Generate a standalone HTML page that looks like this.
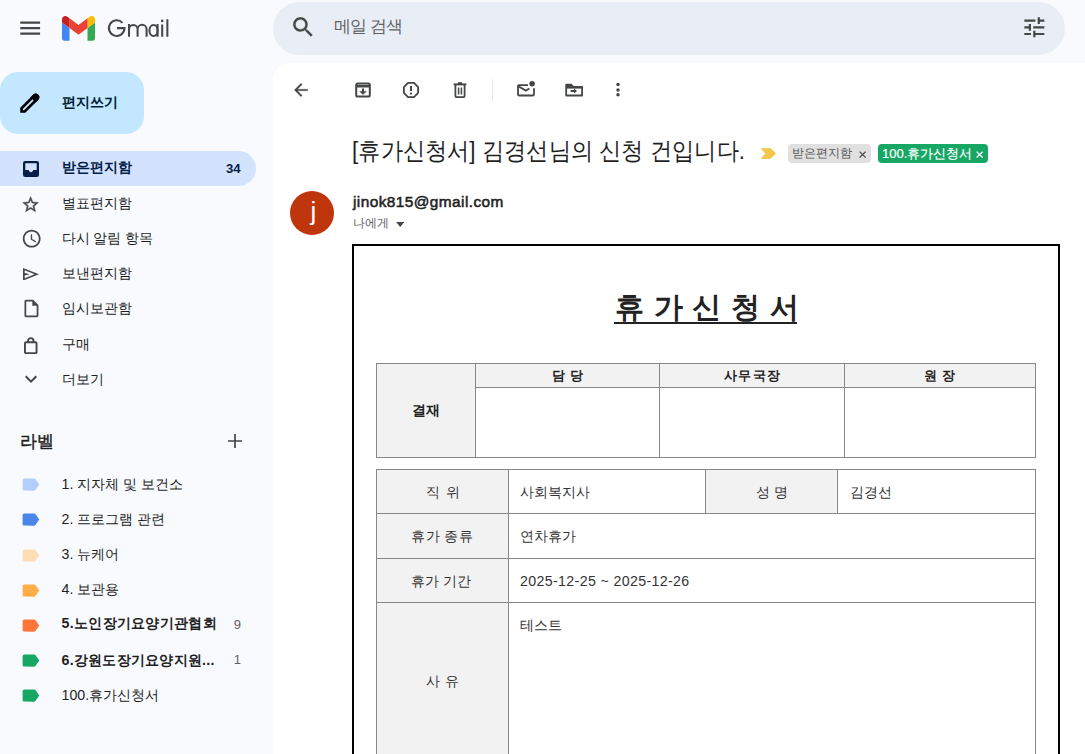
<!DOCTYPE html>
<html><head><meta charset="utf-8">
<style>
*{box-sizing:border-box;margin:0;padding:0}
html,body{width:1085px;height:754px;overflow:hidden}
body{background:#f8fafd;font-family:"Liberation Sans",sans-serif;color:#1f1f1f;position:relative}
.a{position:absolute;white-space:nowrap;line-height:1}
svg{position:absolute;display:block}
.nav{position:absolute;left:0;width:256px;height:35px}
.nav .t{position:absolute;left:61.5px;top:10px;font-size:14.2px;line-height:1;color:#1f1f1f;white-space:nowrap}
.nav svg{fill:#444746}
.lab{position:absolute;left:0;width:256px;height:35px}
.lab .t{position:absolute;left:61.5px;top:10px;font-size:14.2px;line-height:1;color:#1f1f1f;white-space:nowrap}
.lab .c{position:absolute;right:15px;top:10.2px;font-size:13px;line-height:1;color:#5e6063}
.lab svg{left:20px;top:7.2px}
#panel{position:absolute;left:273px;top:63px;width:812px;height:691px;background:#fff;border-top-left-radius:17px}
.ti{fill:#444746}
table{border-collapse:collapse;position:absolute;table-layout:fixed}
td{border:1px solid #8a8a8a;font-size:14.2px;color:#222;line-height:1}
td.h{background:#f2f2f2;text-align:center}
</style></head>
<body>
<!-- header -->
<svg style="left:16.7px;top:15.4px" width="26.4" height="26.4" viewBox="0 0 24 24" fill="#444746"><path d="M3 18h18v-2H3v2zm0-5h18v-2H3v2zm0-7v2h18V6H3z"/></svg>
<svg style="left:62px;top:16px" width="33" height="24.75" viewBox="52 42 88 66"><path fill="#4285f4" d="M58 108h14V74L52 59v43c0 3.32 2.69 6 6 6"/><path fill="#34a853" d="M120 108h14c3.32 0 6-2.69 6-6V59l-20 15"/><path fill="#fbbc04" d="M120 48v26l20-15v-8c0-7.42-8.470-11.65-14.4-7.2"/><path fill="#ea4335" d="M72 74V48l24 18 24-18v26L96 92"/><path fill="#c5221f" d="M52 51v8l20 15V48l-5.6-4.2c-5.94-4.450-14.4-.22-14.4 7.2"/></svg>
<svg style="left:100px;top:10px" width="80" height="35" viewBox="100 10 80 35" fill="none" stroke="#474747" stroke-width="2.05"><path d="M122.5 22.9A7.8 7.8 0 1 0 124.5 28.1H117"/><path d="M129 24V36.85M129 29.3A4.3 4.3 0 0 1 137.6 29.3V36.85M137.6 29.3A4.5 4.5 0 0 1 146.6 29.3V36.85"/><ellipse cx="153.55" cy="30.45" rx="4.1" ry="5.5"/><path d="M157.55 24V36.85M162.2 24.5V36.85M167.35 19.3V36.85"/><circle cx="162.2" cy="20.9" r="1.3" fill="#474747" stroke="none"/></svg>

<div class="a" style="left:273px;top:2px;width:792px;height:53px;border-radius:27px;background:#e9eef6"></div>
<svg style="left:290.1px;top:14.1px" width="26.4" height="26.4" viewBox="0 0 24 24" fill="#444746" stroke="#444746" stroke-width="0.25"><path d="M15.5 14h-.79l-.28-.27C15.41 12.59 16 11.110 16 9.5 16 5.91 13.09 3 9.5 3S3 5.91 3 9.5 5.91 16 9.5 16c1.61 0 3.09-.59 4.23-1.57l.27.28v.79l5 4.99L20.49 19l-4.99-5zm-6 0C7.01 14 5 11.99 5 9.5S7.01 5 9.5 5 14 7.01 14 9.5 11.99 14 9.5 14z"/></svg>
<div class="a" style="left:333.5px;top:18px;font-size:17px;letter-spacing:-0.7px;color:#5f6368">메일 검색</div>
<svg style="left:1020.7px;top:13.7px" width="26.67" height="26.67" viewBox="0 0 24 24" fill="#444746"><path d="M3 17v2h6v-2H3zM3 5v2h10V5H3zm10 16v-2h8v-2h-8v-2h-2v6h2zM7 9v2H3v2h4v2h2V9H7zm14 4v-2H11v2h10zm-6-4h2V7h4V5h-4V3h-2v6z"/></svg>

<!-- compose -->
<div class="a" style="left:0;top:72px;width:144px;height:62px;border-radius:18px;background:#c2e7ff"></div>
<svg style="left:17px;top:92px;overflow:visible" width="24" height="24" viewBox="0 0 24 24"><g transform="translate(12 12) scale(0.91) translate(-12 -12) rotate(-45 12 12)"><path d="M0.4 12L2.9 9.5H22.3A2.5 2.5 0 0 1 22.3 14.5H2.9Z" fill="none" stroke="#000" stroke-width="2.9" stroke-linejoin="miter"/><path d="M18.3 8.05H22.3A3.95 3.95 0 0 1 22.3 15.95H18.3Z" fill="#000"/></g></svg>
<div class="a" style="left:62px;top:95px;font-size:14.4px;font-weight:bold;color:#001d35">편지쓰기</div>

<!-- nav -->
<div class="nav" style="top:150.5px;background:#d3e3fd;border-radius:0 17.5px 17.5px 0;width:255.5px">
 <svg style="left:23px;top:10.3px" width="16" height="16" viewBox="0 0 16 16"><rect x="0" y="0" width="16" height="16" rx="2.2" fill="#041e49"/><path d="M2.3 2.3H13.7V9.1H10.2C10 10.4 9.1 11.2 8 11.2 6.9 11.2 6 10.4 5.8 9.1H2.3Z" fill="#d3e3fd"/></svg>
 <div class="t" style="font-weight:bold;color:#041e49;top:9px">받은편지함</div>
 <div class="a" style="left:226px;top:11px;font-size:13.2px;font-weight:bold;color:#041e49">34</div>
</div>
<div class="nav" style="top:185.7px">
 <svg style="left:21.4px;top:9.3px" width="19.2" height="19.2" viewBox="0 0 24 24" stroke="#444746" stroke-width="0.5"><path d="M22 9.24l-7.19-.62L12 2 9.19 8.63 2 9.24l5.46 4.73L5.82 21 12 17.27 18.18 21l-1.63-7.03L22 9.24zM12 15.4l-3.76 2.27 1-4.28-3.32-2.88 4.38-.38L12 6.1l1.71 4.04 4.38.38-3.32 2.88 1 4.28L12 15.4z"/></svg>
 <div class="t">별표편지함</div>
</div>
<div class="nav" style="top:220.9px">
 <svg style="left:20.5px;top:7.1px" width="21.4" height="21.4" viewBox="0 0 24 24"><path d="M11.99 2C6.47 2 2 6.48 2 12s4.47 10 9.99 10C17.52 22 22 17.52 22 12S17.52 2 11.99 2zM12 20c-4.42 0-8-3.58-8-8s3.58-8 8-8 8 3.58 8 8-3.58 8-8 8zm.5-13H11v6l5.25 3.150.75-1.23-4.5-2.67z"/></svg>
 <div class="t">다시 알림 항목</div>
</div>
<div class="nav" style="top:256.1px">
 <svg style="left:23.2px;top:11.5px" width="16" height="12.6" viewBox="120 160 760 640" preserveAspectRatio="none"><path d="M120-160v-640l760 320-760 320Zm80-120 474-200-474-200v140l240 60-240 60v140Z" transform="translate(0 960)"/></svg>
 <div class="t">보낸편지함</div>
</div>
<div class="nav" style="top:291.3px">
 <svg style="left:20.8px;top:7px" width="20.9" height="20.9" viewBox="0 0 24 24"><path d="M14 2H6c-1.1 0-1.99.9-1.99 2L4 20c0 1.1.89 2 1.99 2H18c1.1 0 2-.9 2-2V8l-6-6zM6 20V4h7v5h5v11H6z"/></svg>
 <div class="t">임시보관함</div>
</div>
<div class="nav" style="top:326.5px">
 <svg style="left:24.3px;top:10px;fill:none" width="13.5" height="17.2" viewBox="0 0 13.5 17.2" stroke="#444746" stroke-width="1.9"><rect x="0.95" y="5.3" width="11.6" height="10.95" rx="1"/><path d="M4 5.3V3.9A2.75 2.75 0 0 1 9.5 3.9V5.3"/></svg>
 <div class="t">구매</div>
</div>
<div class="nav" style="top:361.7px">
 <svg style="left:19px;top:5px" width="24" height="24" viewBox="0 0 24 24"><path d="M16.59 8.59L12 13.17 7.41 8.59 6 10l6 6 6-6z"/></svg>
 <div class="t">더보기</div>
</div>

<div class="a" style="left:20px;top:433.5px;font-size:16.8px;-webkit-text-stroke:0.45px #1f1f1f;letter-spacing:-0.3px;color:#1f1f1f">라벨</div>
<svg style="left:222.7px;top:429.3px" width="24" height="24" viewBox="0 0 24 24" fill="none" stroke="#444746" stroke-width="1.7"><path d="M5 12H19M12 5V19"/></svg>

<!-- labels -->
<div class="lab" style="top:467px"><svg width="21" height="21" viewBox="0 0 24 24" fill="#b3cefb"><path d="M17.63 5.84C17.27 5.33 16.67 5 16 5L5 5.01C3.9 5.01 3 5.9 3 7v10c0 1.1.9 1.99 2 1.99L16 19c.67 0 1.27-.33 1.63-.84L22 12l-4.37-6.16z"/></svg><div class="t">1. 지자체 및 보건소</div></div>
<div class="lab" style="top:502.2px"><svg width="21" height="21" viewBox="0 0 24 24" fill="#4a86e8"><path d="M17.63 5.84C17.27 5.33 16.67 5 16 5L5 5.01C3.9 5.01 3 5.9 3 7v10c0 1.1.9 1.99 2 1.99L16 19c.67 0 1.27-.33 1.63-.84L22 12l-4.37-6.16z"/></svg><div class="t">2. 프로그램 관련</div></div>
<div class="lab" style="top:537.4px"><svg width="21" height="21" viewBox="0 0 24 24" fill="#ffdeb5"><path d="M17.63 5.84C17.27 5.33 16.67 5 16 5L5 5.01C3.9 5.01 3 5.9 3 7v10c0 1.1.9 1.99 2 1.99L16 19c.67 0 1.27-.33 1.63-.84L22 12l-4.37-6.16z"/></svg><div class="t">3. 뉴케어</div></div>
<div class="lab" style="top:572.6px"><svg width="21" height="21" viewBox="0 0 24 24" fill="#ffad47"><path d="M17.63 5.84C17.27 5.33 16.67 5 16 5L5 5.01C3.9 5.01 3 5.9 3 7v10c0 1.1.9 1.99 2 1.99L16 19c.67 0 1.27-.33 1.63-.84L22 12l-4.37-6.16z"/></svg><div class="t" style="top:9.3px">4. 보관용</div></div>
<div class="lab" style="top:607.8px"><svg width="21" height="21" viewBox="0 0 24 24" fill="#ff7537"><path d="M17.63 5.84C17.27 5.33 16.67 5 16 5L5 5.01C3.9 5.01 3 5.9 3 7v10c0 1.1.9 1.99 2 1.99L16 19c.67 0 1.27-.33 1.63-.84L22 12l-4.37-6.16z"/></svg><div class="t" style="font-weight:bold;top:8.6px;letter-spacing:0.3px">5.노인장기요양기관협회</div><div class="c">9</div></div>
<div class="lab" style="top:643px"><svg width="21" height="21" viewBox="0 0 24 24" fill="#16a765"><path d="M17.63 5.84C17.27 5.33 16.67 5 16 5L5 5.01C3.9 5.01 3 5.9 3 7v10c0 1.1.9 1.99 2 1.99L16 19c.67 0 1.27-.33 1.63-.84L22 12l-4.37-6.16z"/></svg><div class="t" style="font-weight:bold;letter-spacing:0.25px">6.강원도장기요양지원...</div><div class="c">1</div></div>
<div class="lab" style="top:678.2px"><svg width="21" height="21" viewBox="0 0 24 24" fill="#16a765"><path d="M17.63 5.84C17.27 5.33 16.67 5 16 5L5 5.01C3.9 5.01 3 5.9 3 7v10c0 1.1.9 1.99 2 1.99L16 19c.67 0 1.27-.33 1.63-.84L22 12l-4.37-6.16z"/></svg><div class="t">100.휴가신청서</div></div>

<!-- panel -->
<div id="panel"></div>
<!-- toolbar -->
<svg style="left:291.1px;top:79.7px" width="20" height="20" viewBox="0 0 24 24" fill="#444746" stroke="#444746" stroke-width="0.3"><path d="M20 11H7.83l5.59-5.59L12 4l-8 8 8 8 1.41-1.41L7.83 13H20v-2z"/></svg>
<svg style="left:353px;top:80px" width="20" height="20" viewBox="0 0 20 20" fill="none" stroke="#444746" stroke-width="2"><rect x="3.2" y="3.4" width="13.6" height="13.2" rx="1.6"/><path d="M3 6.2h14" stroke-width="2.6"/><path d="M10 8.6v4.6" /><path d="M6.8 11.4L10 14.6l3.2-3.2z" fill="#444746" stroke-width="0.6"/></svg>
<svg style="left:401px;top:80px" width="20" height="20" viewBox="0 0 20 20" fill="none" stroke="#444746" stroke-width="1.8"><path d="M7 2.9h6l4.1 4.1v6l-4.1 4.1H7L2.9 13V7z"/><path d="M10 6v5" stroke-width="2"/><circle cx="10" cy="13.6" r="1.1" fill="#444746" stroke="none"/></svg>
<svg style="left:450px;top:80px" width="20" height="20" viewBox="0 0 20 20" fill="none" stroke="#444746" stroke-width="1.8"><path d="M3.6 4.4h12.8" stroke-width="2"/><path d="M8 3.2h4" stroke-width="2"/><path d="M5.4 5v11.1c0 .6.4 1 1 1h7.2c.6 0 1-.4 1-1V5"/><path d="M8.6 7.6v7M11.4 7.6v7" stroke-width="1.5"/></svg>
<div class="a" style="left:492px;top:79px;width:1px;height:22px;background:#e3e6ea"></div>
<svg style="left:516px;top:79px" width="20" height="20" viewBox="0 0 20 20" fill="none" stroke="#444746" stroke-width="1.8"><path d="M12 6.1H2.9c-.5 0-.9.4-.9.9v8.6c0 .5.4.9.9.9h14.2c.5 0 .9-.4.9-.9V9.2"/><path d="M2.4 7.2l7.4 4.4 3.6-2.2"/><circle cx="16.1" cy="4.7" r="2.75" fill="#444746" stroke="none"/></svg>
<svg style="left:564px;top:80px" width="20" height="20" viewBox="0 0 20 20"><path fill="#444746" d="M1.3 4.6Q1.3 3.7 2.2 3.7H7.6L9.6 5.9H18.1Q19 5.9 19 6.8V15.5Q19 16.4 18.1 16.4H2.2Q1.3 16.4 1.3 15.5Z"/><path fill="#fff" d="M3.1 8.6H17.2V14.5H3.1Z"/><path fill="#444746" d="M6.6 10H10.4V11.9H6.6ZM10.1 8.5L13 10.95 10.1 13.4Z"/></svg>
<svg style="left:608px;top:80px" width="20" height="20" viewBox="0 0 20 20" fill="#444746"><circle cx="10" cy="4.6" r="1.75"/><circle cx="10" cy="10" r="1.75"/><circle cx="10" cy="14.8" r="1.75"/></svg>

<!-- subject -->
<div class="a" style="left:352px;top:140px;font-size:22.4px;letter-spacing:0.17px;color:#1f1f1f;transform:scaleY(1.08);transform-origin:0 2px">[휴가신청서] 김경선님의 신청 건입니다.</div>
<svg style="left:761px;top:148.3px" width="15" height="11" viewBox="0 0 15 10.8" fill="#f4c74c"><path d="M0.4 0.4H9.6L14.6 5.4 9.6 10.4H0.4L4.6 5.4z" stroke="#f4c74c" stroke-width="0.8" stroke-linejoin="round"/></svg>
<div class="a" style="left:788px;top:144px;width:83px;height:18.5px;border-radius:4px;background:#dfe0df"></div>
<div class="a" style="left:792px;top:146.5px;font-size:12.4px;color:#555">받은편지함</div>
<svg style="left:858.6px;top:150.6px" width="7.2" height="7.2" viewBox="0 0 7 7" stroke="#555" stroke-width="1.3"><path d="M.6.6l5.8 5.8M6.4.6L.6 6.4"/></svg>
<div class="a" style="left:878px;top:144px;width:110px;height:18.5px;border-radius:4px;background:#16a765"></div>
<div class="a" style="left:882px;top:147px;font-size:13px;-webkit-text-stroke:0.2px #fff;color:#fff">100.휴가신청서</div>
<svg style="left:976px;top:150.6px" width="7.2" height="7.2" viewBox="0 0 7 7" stroke="#fff" stroke-width="1.3"><path d="M.6.6l5.8 5.8M6.4.6L.6 6.4"/></svg>

<!-- sender -->
<div class="a" style="left:290px;top:190.8px;width:44px;height:44px;border-radius:50%;background:#c0360c"></div>
<div class="a" style="left:291.5px;top:198px;width:44px;text-align:center;font-size:26px;color:#fff">j</div>
<div class="a" style="left:353px;top:194px;font-size:15.4px;-webkit-text-stroke:0.55px #1f1f1f;letter-spacing:0.43px;color:#1f1f1f">jinok815@gmail.com</div>
<div class="a" style="left:352.5px;top:217px;font-size:12.2px;color:#5e5e5e">나에게</div>
<svg style="left:395.6px;top:222px" width="8.4" height="4.9" viewBox="0 0 10 6" fill="#444746"><path d="M0 0h10L5 6z"/></svg>

<!-- email body -->
<div class="a" style="left:352px;top:244px;width:708px;height:600px;border:2px solid #000"></div>
<div class="a" style="left:614px;top:293px;width:183.4px;font-size:29px;letter-spacing:0.8px;font-weight:bold;color:#222;border-bottom:2px solid #222;padding-bottom:0;padding-left:1px">휴 가 신 청 서</div>

<!-- table 1 -->
<div class="a" style="left:376px;top:363px;width:660px;height:95px;border:1px solid #888"></div>
<div class="a" style="left:377px;top:364px;width:98px;height:93px;background:#f2f2f2"></div>
<div class="a" style="left:476px;top:364px;width:559px;height:23px;background:#f2f2f2"></div>
<div class="a" style="left:475px;top:363px;width:1px;height:95px;background:#888"></div>
<div class="a" style="left:659px;top:363px;width:1px;height:95px;background:#888"></div>
<div class="a" style="left:844px;top:363px;width:1px;height:95px;background:#888"></div>
<div class="a" style="left:475px;top:387px;width:561px;height:1px;background:#888"></div>
<div class="a" style="left:412px;top:404px;font-size:13.8px;font-weight:bold;color:#222">결재</div>
<div class="a" style="left:551.5px;top:369px;font-size:13.2px;letter-spacing:0.7px;font-weight:bold;color:#222">담 당</div>
<div class="a" style="left:724px;top:369px;font-size:13.2px;font-weight:bold;color:#222;letter-spacing:1.3px">사무국장</div>
<div class="a" style="left:923.5px;top:369px;font-size:13.2px;letter-spacing:0.7px;font-weight:bold;color:#222">원 장</div>

<!-- table 2 -->
<div class="a" style="left:376px;top:469px;width:660px;height:300px;border:1px solid #888"></div>
<div class="a" style="left:377px;top:470px;width:131px;height:298px;background:#f2f2f2"></div>
<div class="a" style="left:706px;top:470px;width:131px;height:43px;background:#f2f2f2"></div>
<div class="a" style="left:508px;top:469px;width:1px;height:300px;background:#888"></div>
<div class="a" style="left:705px;top:469px;width:1px;height:44px;background:#888"></div>
<div class="a" style="left:837px;top:469px;width:1px;height:44px;background:#888"></div>
<div class="a" style="left:376px;top:513px;width:660px;height:1px;background:#888"></div>
<div class="a" style="left:376px;top:558px;width:660px;height:1px;background:#888"></div>
<div class="a" style="left:376px;top:602px;width:660px;height:1px;background:#888"></div>
<div class="a" style="left:426px;top:485px;font-size:14.2px;letter-spacing:1px;color:#333">직 위</div>
<div class="a" style="left:520px;top:485px;font-size:14.2px;color:#333">사회복지사</div>
<div class="a" style="left:755.5px;top:485px;font-size:14.2px;letter-spacing:0.5px;color:#333">성 명</div>
<div class="a" style="left:850px;top:485px;font-size:14.2px;color:#333">김경선</div>
<div class="a" style="left:411px;top:529px;font-size:14.2px;letter-spacing:0.5px;color:#333">휴가 종류</div>
<div class="a" style="left:520px;top:529px;font-size:14.2px;color:#333">연차휴가</div>
<div class="a" style="left:411px;top:574px;font-size:14.2px;color:#333">휴가 기간</div>
<div class="a" style="left:520px;top:574px;font-size:14.2px;letter-spacing:0.36px;color:#333">2025-12-25 ~ 2025-12-26</div>
<div class="a" style="left:520px;top:618px;font-size:14.2px;color:#333">테스트</div>
<div class="a" style="left:425.5px;top:674px;font-size:14.2px;letter-spacing:0.8px;color:#333">사 유</div>
</body></html>
